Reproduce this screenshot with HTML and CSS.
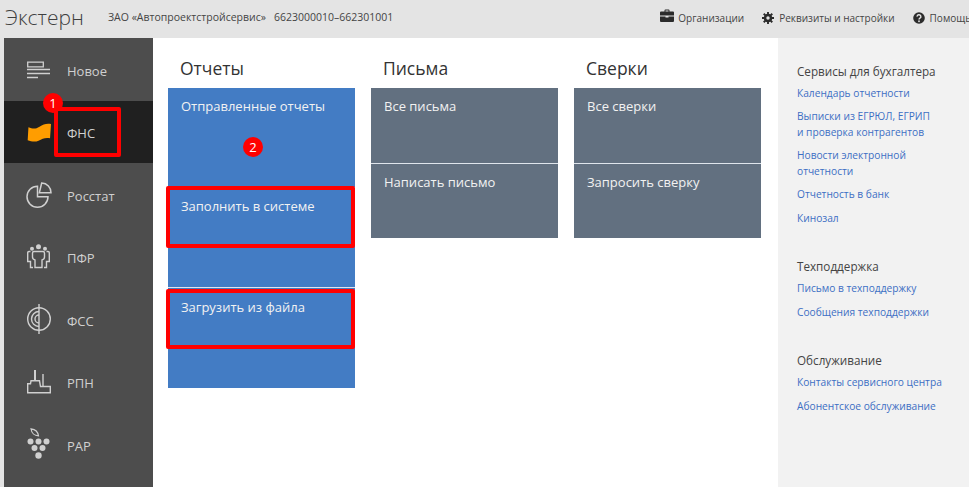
FILE: index.html
```html
<!DOCTYPE html>
<html lang="ru">
<head>
<meta charset="utf-8">
<title>Экстерн</title>
<link rel="stylesheet" href="styles.css">
</head>
<body>
<div class="page">
  <header class="topbar">
    <div class="brand">Экстерн</div>
    <div class="org">ЗАО «Автопроектстройсервис»</div>
    <div class="inn">6623000010–662301001</div>
    <nav class="topnav">
      <a class="toplink"><svg class="topicon topicon-case" viewBox="0 0 14 13"><path fill="#2b2b2b" d="M4.500 2V1a1 1 0 0 1 1-1h3a1 1 0 0 1 1 1v1H13a1 1 0 0 1 1 1v3H0V3a1 1 0 0 1 1-1zm1 0h3V1h-3zM0 7h5.500v1h3V7H14v4.500a1 1 0 0 1-1 1H1a1 1 0 0 1-1-1z"/></svg>Организации</a>
      <a class="toplink"><svg class="topicon" viewBox="0 0 14 14"><path fill="none" stroke="#2b2b2b" stroke-width="3" d="M7 3.500a3.500 3.500 0 1 0 0 7a3.500 3.500 0 1 0 0-7z"/><path stroke="#2b2b2b" stroke-width="2.200" d="M7 0v3M7 11v3M0 7h3M11 7h3M2 2l2 2M10 10l2 2M2 12l2-2M10 4l2-2"/></svg>Реквизиты и настройки</a>
      <a class="toplink"><svg class="topicon" viewBox="0 0 14 14"><circle cx="7" cy="7" r="6.800" fill="#2b2b2b"/><path fill="none" stroke="#e4e4e4" stroke-width="1.700" d="M4.800 5.400a2.200 2.100 0 1 1 3.300 1.800c-.8.500-1.100.9-1.100 1.600"/><circle cx="7" cy="10.800" r="1.050" fill="#e4e4e4"/></svg>Помощь</a>
    </nav>
  </header>
  <div class="layout">
    <aside class="sidebar">
      <a class="side-item">
        <svg class="side-icon" viewBox="0 0 24 24" fill="none" stroke="#d0d0d0"><path stroke-width="1.300" d="M.7 5.200h15.600v4.700H.7z"/><path stroke-width="1.500" d="M0 12.500h23M0 16.500h23M0 20.500h11"/></svg>
        <span>Новое</span>
      </a>
      <a class="side-item side-item-active">
        <svg class="side-icon" viewBox="0 0 25 24"><path fill="#ff9d00" d="M1.500 7C6 9 9 9 13 6.500S20 3 25 3.700L24 18.500C19 17.500 16 19 12 21S4 21.500.7 20.500z"/></svg>
        <span>ФНС</span>
      </a>
      <a class="side-item">
        <svg class="side-icon" viewBox="0 0 24 24" fill="none" stroke="#d0d0d0" stroke-width="1.500"><path d="M10.500 4.250A10.500 10.500 0 1 0 21 14.750H10.500z"/><path d="M14.700 1A9.500 9.500 0 0 1 24 10.800H12.300z"/></svg>
        <span>Росстат</span>
      </a>
      <a class="side-item">
        <svg class="side-icon side-icon-mid" viewBox="0 0 24 27" fill="none" stroke="#d0d0d0" stroke-width="1.400"><circle cx="11.500" cy="3.750" r="2.500" fill="#d0d0d0" stroke="none"/><circle cx="5" cy="5.750" r="2" fill="#d0d0d0" stroke="none"/><circle cx="18" cy="5.750" r="2" fill="#d0d0d0" stroke="none"/><path d="M7 8.500h9c1 0 1.500.7 1.500 1.500v4c0 1.500-1 2.500-2.500 3v7.500H8V17c-1.500-.5-2.500-1.500-2.500-3v-4c0-.8.500-1.500 1.500-1.500z"/><path d="M3.500 8.500H2c-.8 0-1.300.5-1.300 1.300v8.700h2.800v6H6M19.500 8.500H21c.8 0 1.300.5 1.300 1.300v8.700h-2.800v6H17"/></svg>
        <span>ПФР</span>
      </a>
      <a class="side-item">
        <svg class="side-icon side-icon-tall" viewBox="0 0 24 30" fill="none" stroke="#d0d0d0" stroke-width="1.400"><path d="M12 0v30"/><circle cx="12" cy="15" r="11.300"/><path d="M12 7.500a7.500 7.500 0 0 0 0 15M12 11a4 4 0 0 0 0 8"/></svg>
        <span>ФСС</span>
      </a>
      <a class="side-item">
        <svg class="side-icon" viewBox="0 0 24 24" fill="none" stroke="#d0d0d0" stroke-width="1.400"><path d="M.7 13.800h2.800l.5-3h8.500l1 5.700h9.800v6.300H.7z"/><path stroke-width="2" d="M8 0v10.800"/><path d="M16 4v12.500"/></svg>
        <span>РПН</span>
      </a>
      <a class="side-item">
        <svg class="side-icon side-icon-grape" viewBox="0 0 24 32" fill="#d0d0d0"><path fill="none" stroke="#d0d0d0" stroke-width="1.200" d="M4 .8c4 .5 7 3 7.500 7-4 0-7-3-7.500-7z"/><circle cx="3.500" cy="13.500" r="3"/><circle cx="11.500" cy="13.500" r="3"/><circle cx="19.500" cy="13.500" r="3"/><circle cx="7.500" cy="20" r="3"/><circle cx="15.500" cy="20" r="3"/><circle cx="11.500" cy="27.500" r="3.200"/></svg>
        <span>РАР</span>
      </a>
    </aside>
    <main class="content">
      <section class="group">
        <h2 class="group-title">Отчеты</h2>
        <div class="tiles">
          <a class="tile tile-blue tile-first">Отправленные отчеты</a>
          <a class="tile tile-blue tile-second">Заполнить в системе</a>
          <a class="tile tile-blue tile-third">Загрузить из файла</a>
        </div>
      </section>
      <section class="group">
        <h2 class="group-title">Письма</h2>
        <div class="tiles">
          <a class="tile tile-grey">Все письма</a>
          <a class="tile tile-grey">Написать письмо</a>
        </div>
      </section>
      <section class="group">
        <h2 class="group-title">Сверки</h2>
        <div class="tiles">
          <a class="tile tile-grey">Все сверки</a>
          <a class="tile tile-grey">Запросить сверку</a>
        </div>
      </section>
    </main>
    <aside class="services">
      <section class="svc-block">
        <h3 class="svc-title">Сервисы для бухгалтера</h3>
        <a class="svc-link">Календарь отчетности</a>
        <a class="svc-link">Выписки из ЕГРЮЛ, ЕГРИП<br>и проверка контрагентов</a>
        <a class="svc-link">Новости электронной<br>отчетности</a>
        <a class="svc-link">Отчетность в банк</a>
        <a class="svc-link">Кинозал</a>
      </section>
      <section class="svc-block">
        <h3 class="svc-title">Техподдержка</h3>
        <a class="svc-link">Письмо в техподдержку</a>
        <a class="svc-link">Сообщения техподдержки</a>
      </section>
      <section class="svc-block">
        <h3 class="svc-title">Обслуживание</h3>
        <a class="svc-link">Контакты сервисного центра</a>
        <a class="svc-link">Абонентское обслуживание</a>
      </section>
    </aside>
  </div>
  <div class="mark mark-1"></div>
  <div class="mark mark-2"></div>
  <div class="mark mark-3"></div>
  <div class="badge badge-1">1</div>
  <div class="badge badge-2">2</div>
</div>
</body>
</html>
```
FILE: styles.css
```css
* { box-sizing: border-box; }
html, body { margin: 0; padding: 0; height: 100%; overflow: hidden; }
body { font-family: "Open Sans", "Noto Sans", sans-serif; background: #e4e4e4; }
.page { position: relative; width: 969px; height: 487px; overflow: hidden; display: flex; flex-direction: column; }

.topbar { height: 38px; flex: none; display: flex; align-items: center; padding: 0 0 4px 5px; background: #e4e4e4; color: #444; white-space: nowrap; }
.brand { flex: none; font-size: 21px; font-weight: 300; color: #3f3f3f; width: 103px; line-height: 36px; }
.org { flex: none; font-size: 10.5px; width: 166px; }
.inn { flex: none; font-size: 10.5px; }
.topnav { flex: none; display: flex; padding: 2px 0 0 267px; }
.toplink { flex: none; display: flex; align-items: center; font-size: 10px; margin-right: 18px; }
.topicon { width: 12px; height: 12px; margin-right: 5px; flex: none; }
.topicon-case { width: 14px; height: 14px; margin: 0 4px 5px 0; }

.layout { flex: 1; display: flex; min-height: 0; padding-left: 4px; }

.sidebar { width: 149px; flex: none; background: #4d4d4d; color: #d0d0d0; }
.side-item { height: 62.5px; display: flex; align-items: center; padding-left: 23px; font-size: 13px; }
.side-item span { padding-top: 2.5px; }
.side-item-active { background: #202020; }
.side-icon { width: 24px; height: 24px; margin-right: 16px; flex: none; overflow: visible; }
.side-icon-mid { height: 27px; }
.side-icon-tall { height: 30px; }
.side-icon-grape { height: 32px; }

.content { width: 625px; flex: none; background: #fff; padding: 19px 17px 0 15px; display: flex; gap: 16px; }
.group { width: 187px; flex: none; }
.group-title { margin: 0 0 8px 12px; font-size: 17.5px; font-weight: 400; line-height: 23px; color: #333; }
.tiles { display: flex; flex-direction: column; }
.tile { display: block; height: 75px; padding: 9px 13px; font-size: 13px; line-height: 18px; color: #f2f2f2; }
.tile-first { height: 99px; }
.tile-second { height: 100px; }
.tile-third { height: 101px; padding-top: 10px; }
.tile-blue { background: #437cc4; }
.tile-grey { background: #627080; }
.tile + .tile { border-top: 1px solid #dfe5ec; }

.services { flex: 1; background: #f2f2f2; padding: 23.5px 10px 0 19px; }
.svc-block { margin-bottom: 31px; }
.svc-title { margin: 0 0 6px; font-size: 11.7px; font-weight: 400; line-height: 18px; color: #444; }
.svc-link { display: block; font-size: 10.2px; line-height: 15.5px; color: #3d6fc4; margin-bottom: 8px; }

.mark { position: absolute; border: 4px solid #f00; border-radius: 2px; }
.mark-1 { left: 54px; top: 107px; width: 67px; height: 50px; }
.mark-2 { left: 166px; top: 186px; width: 189px; height: 62px; }
.mark-3 { left: 166px; top: 289px; width: 189px; height: 60px; }
.badge { position: absolute; width: 20px; height: 20px; border-radius: 50%; background: #f00; color: #fff; font-size: 13px; line-height: 20px; text-align: center; }
.badge-1 { left: 43px; top: 93px; }
.badge-2 { left: 243px; top: 137px; }
```
